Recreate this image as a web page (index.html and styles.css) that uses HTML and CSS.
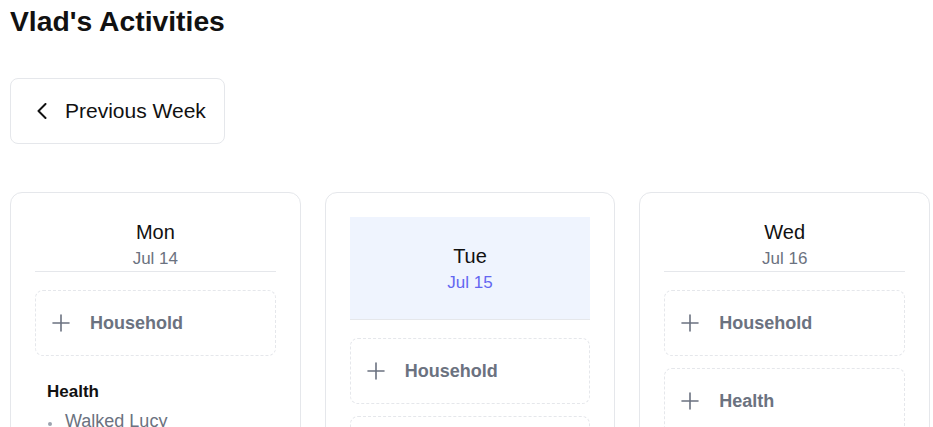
FILE: index.html
```html
<!DOCTYPE html>
<html lang="en">
<head>
<meta charset="utf-8">
<title>Vlad's Activities</title>
<link rel="stylesheet" href="styles.css">
</head>
<body>
<div class="page">
  <h1 class="title">Vlad's Activities</h1>
  <button class="prev-btn" type="button">
    <svg class="chev" width="10" height="16" viewBox="0 0 10 16" aria-hidden="true"><path d="M8.5 1 L1.5 8 L8.5 15" fill="none" stroke="#111" stroke-width="2" stroke-linecap="round" stroke-linejoin="round"/></svg>
    <span>Previous Week</span>
  </button>
  <div class="week">
    <section class="day">
      <header class="day-head">
        <div class="day-name">Mon</div>
        <div class="day-date">Jul 14</div>
      </header>
      <div class="day-body">
        <button class="add-box" type="button">
          <svg class="plus" width="18" height="18" viewBox="0 0 18 18" aria-hidden="true"><path d="M9 1v16M1 9h16" stroke="#6b7280" stroke-width="1.6" stroke-linecap="round"/></svg>
          <span>Household</span>
        </button>
        <div class="cat">
          <h3 class="cat-title">Health</h3>
          <ul class="cat-list">
            <li>Walked Lucy</li>
            <li>Gym session</li>
          </ul>
        </div>
      </div>
    </section>
    <section class="day">
      <header class="day-head today">
        <div class="day-name">Tue</div>
        <div class="day-date">Jul 15</div>
      </header>
      <div class="day-body">
        <button class="add-box" type="button">
          <svg class="plus" width="18" height="18" viewBox="0 0 18 18" aria-hidden="true"><path d="M9 1v16M1 9h16" stroke="#6b7280" stroke-width="1.6" stroke-linecap="round"/></svg>
          <span>Household</span>
        </button>
        <button class="add-box" type="button">
          <svg class="plus" width="18" height="18" viewBox="0 0 18 18" aria-hidden="true"><path d="M9 1v16M1 9h16" stroke="#6b7280" stroke-width="1.6" stroke-linecap="round"/></svg>
          <span>Health</span>
        </button>
      </div>
    </section>
    <section class="day">
      <header class="day-head">
        <div class="day-name">Wed</div>
        <div class="day-date">Jul 16</div>
      </header>
      <div class="day-body">
        <button class="add-box" type="button">
          <svg class="plus" width="18" height="18" viewBox="0 0 18 18" aria-hidden="true"><path d="M9 1v16M1 9h16" stroke="#6b7280" stroke-width="1.6" stroke-linecap="round"/></svg>
          <span>Household</span>
        </button>
        <button class="add-box" type="button">
          <svg class="plus" width="18" height="18" viewBox="0 0 18 18" aria-hidden="true"><path d="M9 1v16M1 9h16" stroke="#6b7280" stroke-width="1.6" stroke-linecap="round"/></svg>
          <span>Health</span>
        </button>
      </div>
    </section>
  </div>
</div>
</body>
</html>
```
FILE: styles.css
```css
* { box-sizing: border-box; }
html, body { margin: 0; padding: 0; background: #fff; }
body {
  font-family: "Liberation Sans", Arial, sans-serif;
  color: #111111;
}
.page {
  padding: 4px 3px 0 10px;
}
.title {
  margin: 0;
  font-size: 28.3px;
  line-height: 34px;
  font-weight: 700;
  color: #111111;
}
.prev-btn {
  margin-top: 40px;
  display: inline-flex;
  align-items: center;
  gap: 18px;
  padding: 20px 18px 20px 26px;
  border: 1px solid #e5e7eb;
  border-radius: 8px;
  background: #fff;
  font-family: inherit;
  font-size: 21px;
  line-height: 24px;
  color: #111111;
  cursor: pointer;
}
.chev { display: block; }
.week {
  margin-top: 48px;
  display: grid;
  grid-template-columns: repeat(3, 1fr);
  gap: 24px;
}
.day {
  border: 1px solid #e5e7eb;
  border-radius: 12px;
  padding: 24px;
  min-height: 400px;
}
.day-head {
  text-align: center;
  border-bottom: 1px solid #e5e7eb;
}
.day-head.today {
  background: #eff4fe;
  padding: 24px 0;
}
.day-name {
  font-size: 20px;
  line-height: 30px;
  color: #111111;
}
.day-date {
  font-size: 17px;
  line-height: 24px;
  color: #6b7280;
}
.today .day-date { color: #6366f1; }
.day-body {
  margin-top: 18px;
  display: flex;
  flex-direction: column;
  gap: 12px;
}
.add-box {
  display: flex;
  align-items: center;
  width: 100%;
  padding: 20px 16px;
  border: 1px dashed #e5e7eb;
  border-radius: 8px;
  background: #fff;
  font-family: inherit;
  font-size: 18px;
  line-height: 24px;
  font-weight: 700;
  color: #6b7280;
  text-align: left;
  cursor: pointer;
}
.plus { display: block; margin-right: 20px; flex: none; }
.cat {
  padding: 12px;
}
.cat-title {
  margin: 0;
  font-size: 17px;
  line-height: 24px;
  font-weight: 700;
  color: #111111;
}
.cat-list {
  list-style: none;
  margin: 4px 0 0;
  padding: 0;
}
.cat-list li {
  position: relative;
  padding-left: 18px;
  font-size: 18px;
  line-height: 26px;
  color: #6b7280;
}
.cat-list li::before {
  content: "";
  position: absolute;
  left: 1px;
  top: 14px;
  width: 4px;
  height: 4px;
  border-radius: 50%;
  background: #9ca3af;
}
```
